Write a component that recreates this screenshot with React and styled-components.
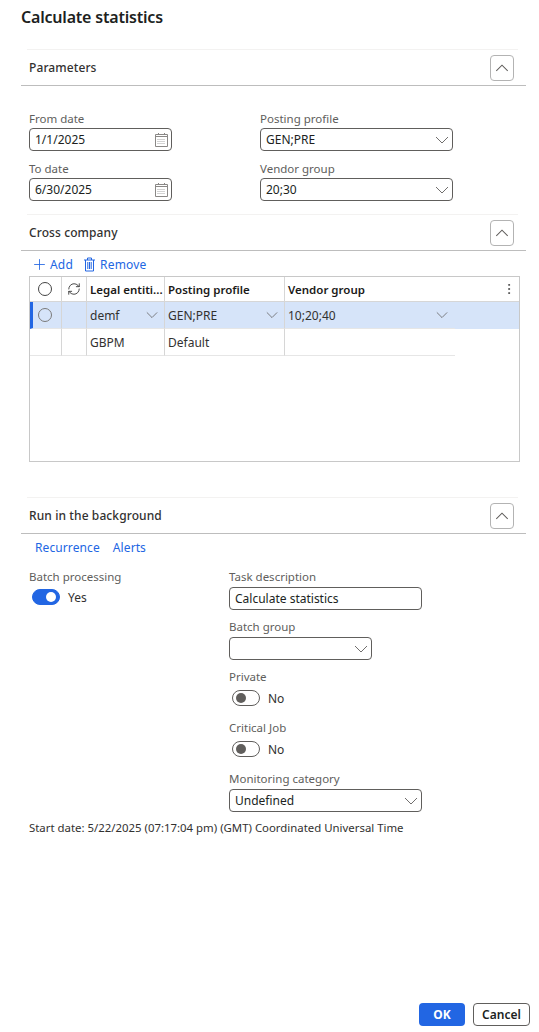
import styled, { createGlobalStyle } from "styled-components";
import { Plus, RefreshCw, EllipsisVertical } from "lucide-react";

const GlobalStyle = createGlobalStyle`
  html, body {
    margin: 0;
    padding: 0;
    background: #fff;
  }
  * {
    box-sizing: border-box;
  }
`;

const Page = styled.div`
  display: flex;
  flex-direction: column;
  width: 539px;
  height: 1032px;
  overflow: hidden;
  background: #fff;
  color: #201f1e;
  font-family: "Noto Sans", "Open Sans", sans-serif;
  font-size: 12px;
`;

const Title = styled.h1`
  margin: 0;
  height: 49px;
  padding: 5px 0 0 21px;
  font-size: 16px;
  line-height: 24px;
  font-weight: 600;
  letter-spacing: -0.2px;
  color: #201f1e;
`;

const Section = styled.section`
  margin-top: ${(p) => p.$top || 0}px;
  padding: 0 13px 0 21px;
`;

const SectionHead = styled.div`
  height: 37px;
  border-bottom: 1px solid #bdbdbd;
  padding: 0 8px 0 6px;
`;

const SectionHeadInner = styled.div`
  height: 36px;
  display: flex;
  align-items: center;
  justify-content: space-between;
  padding: 0 4px 0 2px;
  border-top: 1px solid #f3f2f1;
`;

const SectionTitle = styled.span`
  font-size: 12px;
  font-weight: 500;
  letter-spacing: 0.1px;
  color: #323130;
`;

const CollapseButton = styled.button`
  width: 24px;
  height: 26px;
  padding: 0;
  display: flex;
  align-items: center;
  justify-content: center;
  background: #fff;
  border: 1px solid #b3b3b3;
  border-radius: 4px;
  color: #555;
`;

const FieldColumns = styled.div`
  display: flex;
  gap: ${(p) => p.$gap}px;
  padding: ${(p) => p.$top}px 0 0 8px;
  height: ${(p) => p.$height}px;
`;

const FieldColumn = styled.div`
  display: flex;
  flex-direction: column;
  width: ${(p) => p.$width}px;
`;

const Field = styled.div`
  display: flex;
  flex-direction: column;
  height: ${(p) => p.$height || 50}px;
`;

const Label = styled.label`
  height: ${(p) => (p.$tall ? 18 : 17)}px;
  flex: none;
  line-height: 15px;
  font-size: 11.5px;
  color: #605e5c;
`;

const InputBox = styled.div`
  width: ${(p) => p.$width}px;
  height: 23px;
  flex: none;
  display: flex;
  align-items: center;
  justify-content: ${(p) => (p.$end ? "flex-end" : "space-between")};
  padding: 0 3px 0 5px;
  border: 1px solid #605e5c;
  border-radius: 4px;
  font-size: 12px;
  color: #201f1e;
  background: #fff;
`;

const ChevronWrap = styled.span`
  display: flex;
  color: #605e5c;
`;

const Toolbar = styled.div`
  display: flex;
  align-items: center;
  height: 25px;
  padding: 1px 0 0 10px;
  color: #2266e3;
  font-size: 12px;
  letter-spacing: 0.2px;
`;

const ToolButton = styled.span`
  display: inline-flex;
  align-items: center;
  gap: ${(p) => p.$gap}px;
  margin-right: ${(p) => p.$right}px;
`;

const Grid = styled.div`
  margin-left: 8px;
  width: 491px;
  height: 186px;
  border: 1px solid #c8c8c8;
`;

const Row = styled.div`
  display: grid;
  grid-template-columns: 32px 25px 78px 120px 1fr;
  height: ${(p) => p.$height}px;
  background: ${(p) => (p.$selected ? "#d6e4f9" : "#fff")};
  border-bottom: ${(p) => (p.$header ? "1px solid #d6d6d6" : "none")};
`;

const Cell = styled.div`
  display: flex;
  align-items: center;
  justify-content: ${(p) => (p.$center ? "center" : "space-between")};
  padding: ${(p) => (p.$center ? "0" : "0 6px 0 3px")};
  min-width: 0;
  border-right: ${(p) => (p.$last ? "none" : "1px solid #d6d6d6")};
  border-bottom: ${(p) => (p.$line ? "1px solid #e6e6e6" : "none")};
  font-size: ${(p) => (p.$head ? "11.5px" : "12px")};
  font-weight: ${(p) => (p.$head ? 600 : 400)};
  color: ${(p) => (p.$head ? "#1b1a19" : "#323130")};
  white-space: nowrap;
`;

const SelectCell = styled(Cell)`
  border-left: ${(p) => (p.$active ? "3px solid #2266e3" : "none")};
  padding-right: ${(p) => (p.$active ? "4px" : "1px")};
`;

const HeadEndCell = styled(Cell)`
  padding-right: 3px;
`;

const VendorCell = styled(Cell)`
  width: 170px;
  padding-right: 7px;
`;

const Radio = styled.span`
  width: 14px;
  height: 14px;
  border-radius: 50%;
  border: 1px solid ${(p) => (p.$muted ? "#7a7a7a" : "#444")};
  background: transparent;
`;

const LinkRow = styled.div`
  display: flex;
  gap: 13px;
  height: 26px;
  align-items: center;
  padding-left: 14px;
  color: #2266e3;
  font-size: 12px;
  letter-spacing: 0.1px;
`;

const BatchColumns = styled.div`
  display: flex;
  padding: 9px 0 0 8px;
`;

const ToggleLine = styled.div`
  display: flex;
  align-items: center;
  gap: 8px;
  height: 16px;
  padding-left: 3px;
  margin-top: ${(p) => p.$top || 0}px;
  font-size: 12px;
  color: #323130;
`;

const Track = styled.span`
  display: flex;
  align-items: center;
  justify-content: ${(p) => (p.$on ? "flex-end" : "flex-start")};
  width: 28px;
  height: 16px;
  padding: 0 3px;
  border-radius: 8px;
  background: ${(p) => (p.$on ? "#2266e3" : "#fff")};
  border: 1px solid ${(p) => (p.$on ? "#2266e3" : "#605e5c")};
`;

const Knob = styled.span`
  width: 10px;
  height: 10px;
  border-radius: 50%;
  background: ${(p) => (p.$on ? "#fff" : "#605e5c")};
`;

const StartDate = styled.div`
  padding: 8px 0 0 29px;
  font-size: 11.4px;
  line-height: 15px;
  color: #323130;
`;

const Footer = styled.div`
  margin-top: auto;
  display: flex;
  justify-content: flex-end;
  gap: 8px;
  padding: 0 9px 6px 0;
`;

const OkButton = styled.button`
  width: 46px;
  height: 23px;
  padding: 0;
  border: none;
  border-radius: 4px;
  background: #2266e3;
  color: #fff;
  font: 700 12px "Noto Sans", sans-serif;
`;

const CancelButton = styled.button`
  width: 57px;
  height: 23px;
  padding: 0;
  border: 1px solid #605e5c;
  border-radius: 4px;
  background: #fff;
  color: #201f1e;
  font: 600 12px "Noto Sans", sans-serif;
`;

const Chevron = ({ size = 14, up }) => (
  <ChevronWrap>
    <svg width={size} height={size} viewBox="0 0 14 14" fill="none" stroke="currentColor" strokeWidth="0.9">
      <path d={up ? "M2 9.5 L7 4.5 L12 9.5" : "M1 4 L7 10 L13 4"} />
    </svg>
  </ChevronWrap>
);

const Calendar = () => (
  <svg width="13" height="14" viewBox="0 0 13 14" fill="none" stroke="#8a8886" strokeWidth="1">
    <path d="M0.5 1.5 H12.5 V13.5 H0.5 Z" />
    <path d="M0.5 3.5 H12.5" />
    <path d="M3.5 0 V2 M9.5 0 V2" />
    <path d="M2.5 6.5 H10.5 M2.5 8.5 H10.5 M2.5 10.5 H10.5" strokeDasharray="1 1" stroke="#a6a6a6" />
  </svg>
);

const TrashIcon = () => (
  <svg width="13" height="15" viewBox="0 0 13 15" fill="none" stroke="#2266e3" strokeWidth="1">
    <path d="M1 3 H12 M4.5 3 V1 H8.5 V3" />
    <path d="M2.5 3 V14 H10.5 V3" />
    <path d="M4.8 5 V12 M6.5 5 V12 M8.2 5 V12" />
  </svg>
);

const SectionHeader = ({ title }) => (
  <SectionHead>
    <SectionHeadInner>
      <SectionTitle>{title}</SectionTitle>
      <CollapseButton>
        <Chevron up size={16} />
      </CollapseButton>
    </SectionHeadInner>
  </SectionHead>
);

const Toggle = ({ on, text, top }) => (
  <ToggleLine $top={top}>
    <Track $on={on}>
      <Knob $on={on} />
    </Track>
    {text}
  </ToggleLine>
);

export default function App() {
  return (
    <Page>
      <GlobalStyle />
      <Title>Calculate statistics</Title>

      <Section>
        <SectionHeader title="Parameters" />
        <FieldColumns $gap={88} $top={25} $height={128}>
          <FieldColumn $width={143}>
            <Field>
              <Label>From date</Label>
              <InputBox $width={143}>
                1/1/2025
                <Calendar />
              </InputBox>
            </Field>
            <Field>
              <Label>To date</Label>
              <InputBox $width={143}>
                6/30/2025
                <Calendar />
              </InputBox>
            </Field>
          </FieldColumn>
          <FieldColumn $width={193}>
            <Field>
              <Label>Posting profile</Label>
              <InputBox $width={193}>
                GEN;PRE
                <Chevron />
              </InputBox>
            </Field>
            <Field>
              <Label>Vendor group</Label>
              <InputBox $width={193}>
                20;30
                <Chevron />
              </InputBox>
            </Field>
          </FieldColumn>
        </FieldColumns>
      </Section>

      <Section>
        <SectionHeader title="Cross company" />
        <Toolbar>
          <ToolButton $gap={2} $right={10}>
            <Plus size={17} strokeWidth={1.2} />
            Add
          </ToolButton>
          <ToolButton $gap={4} $right={0}>
            <TrashIcon />
            Remove
          </ToolButton>
        </Toolbar>
        <Grid>
          <Row $header $height={25}>
            <SelectCell $center>
              <Radio />
            </SelectCell>
            <Cell $center>
              <RefreshCw size={14} strokeWidth={1.5} color="#333" />
            </Cell>
            <Cell $head>Legal entiti...</Cell>
            <Cell $head>Posting profile</Cell>
            <HeadEndCell $head $last>
              Vendor group
              <EllipsisVertical size={14} strokeWidth={1.5} color="#444" />
            </HeadEndCell>
          </Row>
          <Row $selected $height={27}>
            <SelectCell $center $active $line>
              <Radio $muted />
            </SelectCell>
            <Cell $center $line />
            <Cell $line>
              demf
              <Chevron size={12} />
            </Cell>
            <Cell $line>
              GEN;PRE
              <Chevron size={12} />
            </Cell>
            <VendorCell $last $line>
              10;20;40
              <Chevron size={12} />
            </VendorCell>
          </Row>
          <Row $height={27}>
            <Cell $line />
            <Cell $line />
            <Cell $line>GBPM</Cell>
            <Cell $line>Default</Cell>
            <VendorCell $last $line />
          </Row>
        </Grid>
      </Section>

      <Section $top={35}>
        <SectionHeader title="Run in the background" />
        <LinkRow>
          <span>Recurrence</span>
          <span>Alerts</span>
        </LinkRow>
        <BatchColumns>
          <FieldColumn $width={200}>
            <Label>Batch processing</Label>
            <Toggle on text="Yes" top={3} />
          </FieldColumn>
          <FieldColumn $width={193}>
            <Field>
              <Label $tall>Task description</Label>
              <InputBox $width={193}>Calculate statistics</InputBox>
            </Field>
            <Field>
              <Label $tall>Batch group</Label>
              <InputBox $width={143} $end>
                <Chevron />
              </InputBox>
            </Field>
            <Field $height={51}>
              <Label>Private</Label>
              <Toggle text="No" top={4} />
            </Field>
            <Field $height={51}>
              <Label>Critical Job</Label>
              <Toggle text="No" top={4} />
            </Field>
            <Field $height={41}>
              <Label $tall>Monitoring category</Label>
              <InputBox $width={193}>
                Undefined
                <Chevron />
              </InputBox>
            </Field>
          </FieldColumn>
        </BatchColumns>
      </Section>

      <StartDate>Start date: 5/22/2025 (07:17:04 pm) (GMT) Coordinated Universal Time</StartDate>

      <Footer>
        <OkButton>OK</OkButton>
        <CancelButton>Cancel</CancelButton>
      </Footer>
    </Page>
  );
}
